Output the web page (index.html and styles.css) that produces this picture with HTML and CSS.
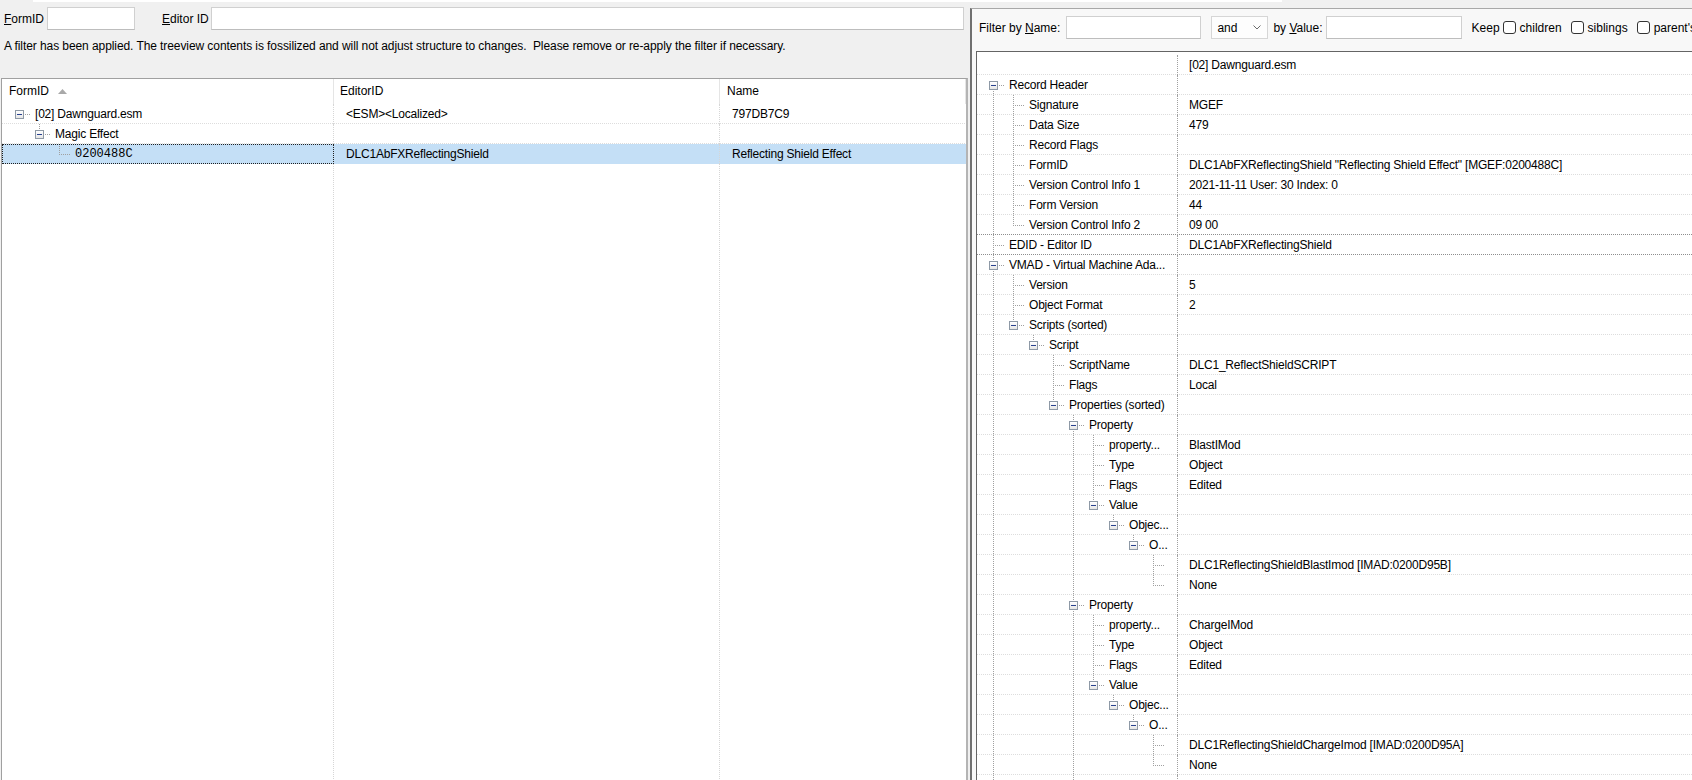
FILE: index.html
```html
<!DOCTYPE html>
<html>
<head>
<meta charset="utf-8">
<title>Record view</title>
<link rel="stylesheet" href="styles.css">
</head>
<body>
<div class="app">
  <div class="strip"></div>
  <div class="panes">
    <section class="left">
      <div class="search">
        <label class="lbl"><u>F</u>ormID</label>
        <input class="field formid" type="text">
        <label class="lbl lbl-editor"><u>E</u>ditor ID</label>
        <input class="field editor" type="text">
      </div>
      <p class="notice">A filter has been applied. The treeview contents is fossilized and will not adjust structure to changes.  Please remove or re-apply the filter if necessary.</p>
      <div class="grid">
        <div class="grid-head">
          <div class="hc c1">FormID<svg class="sort" width="9" height="5" viewBox="0 0 9 5"><path d="M0 5 L4.5 0 L9 5 Z" fill="#a9a9a9"/></svg></div>
          <div class="hc c2">EditorID</div>
          <div class="hc c3">Name</div>
        </div>
        <div class="grid-body">
          <div class="row">
            <div class="cell c1 node"><span class="g g-b"><span class="box"></span></span><span class="t">[02] Dawnguard.esm</span></div>
            <div class="cell c2 txt">&lt;ESM&gt;&lt;Localized&gt;</div>
            <div class="cell c3 txt">797DB7C9</div>
          </div>
          <div class="row">
            <div class="cell c1 node"><span class="g"></span><span class="g g-bu"><span class="box"></span></span><span class="t">Magic Effect</span></div>
            <div class="cell c2 txt"></div>
            <div class="cell c3 txt"></div>
          </div>
          <div class="row sel">
            <div class="cell c1 node focus"><span class="g"></span><span class="g"></span><span class="g g-l"></span><span class="t mono">0200488C</span></div>
            <div class="cell c2 txt">DLC1AbFXReflectingShield</div>
            <div class="cell c3 txt">Reflecting Shield Effect</div>
          </div>
        </div>
      </div>
    </section>

    <section class="right">
      <div class="filter">
        <span class="lbl">Filter by <u>N</u>ame:</span>
        <input class="field f-name" type="text">
        <div class="combo"><span>and</span><svg width="8" height="5" viewBox="0 0 8 5"><path d="M0.5 0.5 L4 4 L7.5 0.5" fill="none" stroke="#6b6b6b" stroke-width="1"/></svg></div>
        <span class="lbl by-value">by <u>V</u>alue:</span>
        <input class="field f-value" type="text">
        <span class="lbl keep">Keep</span>
        <span class="chk"></span><span class="lbl">children</span>
        <span class="chk next"></span><span class="lbl">siblings</span>
        <span class="chk next"></span><span class="lbl">parent's</span>
      </div>
      <div class="view">
        <div class="row"><div class="lab"></div><div class="val">[02] Dawnguard.esm</div></div>
        <div class="row"><div class="lab"><span class="g g-bd"><span class="box"></span></span><span class="t">Record Header</span></div><div class="val"></div></div>
        <div class="row"><div class="lab"><span class="g g-v"></span><span class="g g-t"></span><span class="t">Signature</span></div><div class="val">MGEF</div></div>
        <div class="row"><div class="lab"><span class="g g-v"></span><span class="g g-t"></span><span class="t">Data Size</span></div><div class="val">479</div></div>
        <div class="row"><div class="lab"><span class="g g-v"></span><span class="g g-t"></span><span class="t">Record Flags</span></div><div class="val"></div></div>
        <div class="row"><div class="lab"><span class="g g-v"></span><span class="g g-t"></span><span class="t">FormID</span></div><div class="val">DLC1AbFXReflectingShield "Reflecting Shield Effect" [MGEF:0200488C]</div></div>
        <div class="row"><div class="lab"><span class="g g-v"></span><span class="g g-t"></span><span class="t">Version Control Info 1</span></div><div class="val">2021-11-11 User: 30 Index: 0</div></div>
        <div class="row"><div class="lab"><span class="g g-v"></span><span class="g g-t"></span><span class="t">Form Version</span></div><div class="val">44</div></div>
        <div class="row major"><div class="lab"><span class="g g-v"></span><span class="g g-l"></span><span class="t">Version Control Info 2</span></div><div class="val">09 00</div></div>
        <div class="row major"><div class="lab"><span class="g g-t"></span><span class="t">EDID - Editor ID</span></div><div class="val">DLC1AbFXReflectingShield</div></div>
        <div class="row"><div class="lab"><span class="g g-bud"><span class="box"></span></span><span class="t">VMAD - Virtual Machine Ada...</span></div><div class="val"></div></div>
        <div class="row"><div class="lab"><span class="g g-v"></span><span class="g g-t"></span><span class="t">Version</span></div><div class="val">5</div></div>
        <div class="row"><div class="lab"><span class="g g-v"></span><span class="g g-t"></span><span class="t">Object Format</span></div><div class="val">2</div></div>
        <div class="row"><div class="lab"><span class="g g-v"></span><span class="g g-bu"><span class="box"></span></span><span class="t">Scripts (sorted)</span></div><div class="val"></div></div>
        <div class="row"><div class="lab"><span class="g g-v"></span><span class="g"></span><span class="g g-bu"><span class="box"></span></span><span class="t">Script</span></div><div class="val"></div></div>
        <div class="row"><div class="lab"><span class="g g-v"></span><span class="g"></span><span class="g"></span><span class="g g-t"></span><span class="t">ScriptName</span></div><div class="val">DLC1_ReflectShieldSCRIPT</div></div>
        <div class="row"><div class="lab"><span class="g g-v"></span><span class="g"></span><span class="g"></span><span class="g g-t"></span><span class="t">Flags</span></div><div class="val">Local</div></div>
        <div class="row"><div class="lab"><span class="g g-v"></span><span class="g"></span><span class="g"></span><span class="g g-bu"><span class="box"></span></span><span class="t">Properties (sorted)</span></div><div class="val"></div></div>

        <div class="row"><div class="lab"><span class="g g-v"></span><span class="g"></span><span class="g"></span><span class="g"></span><span class="g g-bud"><span class="box"></span></span><span class="t">Property</span></div><div class="val"></div></div>
        <div class="row"><div class="lab"><span class="g g-v"></span><span class="g"></span><span class="g"></span><span class="g"></span><span class="g g-v"></span><span class="g g-t"></span><span class="t">property...</span></div><div class="val">BlastIMod</div></div>
        <div class="row"><div class="lab"><span class="g g-v"></span><span class="g"></span><span class="g"></span><span class="g"></span><span class="g g-v"></span><span class="g g-t"></span><span class="t">Type</span></div><div class="val">Object</div></div>
        <div class="row"><div class="lab"><span class="g g-v"></span><span class="g"></span><span class="g"></span><span class="g"></span><span class="g g-v"></span><span class="g g-t"></span><span class="t">Flags</span></div><div class="val">Edited</div></div>
        <div class="row"><div class="lab"><span class="g g-v"></span><span class="g"></span><span class="g"></span><span class="g"></span><span class="g g-v"></span><span class="g g-bu"><span class="box"></span></span><span class="t">Value</span></div><div class="val"></div></div>
        <div class="row"><div class="lab"><span class="g g-v"></span><span class="g"></span><span class="g"></span><span class="g"></span><span class="g g-v"></span><span class="g"></span><span class="g g-bu"><span class="box"></span></span><span class="t">Objec...</span></div><div class="val"></div></div>
        <div class="row"><div class="lab"><span class="g g-v"></span><span class="g"></span><span class="g"></span><span class="g"></span><span class="g g-v"></span><span class="g"></span><span class="g"></span><span class="g g-bu"><span class="box"></span></span><span class="t">O...</span></div><div class="val"></div></div>
        <div class="row"><div class="lab"><span class="g g-v"></span><span class="g"></span><span class="g"></span><span class="g"></span><span class="g g-v"></span><span class="g"></span><span class="g"></span><span class="g"></span><span class="g g-t"></span></div><div class="val">DLC1ReflectingShieldBlastImod [IMAD:0200D95B]</div></div>
        <div class="row"><div class="lab"><span class="g g-v"></span><span class="g"></span><span class="g"></span><span class="g"></span><span class="g g-v"></span><span class="g"></span><span class="g"></span><span class="g"></span><span class="g g-l"></span></div><div class="val">None</div></div>

        <div class="row"><div class="lab"><span class="g g-v"></span><span class="g"></span><span class="g"></span><span class="g"></span><span class="g g-bud"><span class="box"></span></span><span class="t">Property</span></div><div class="val"></div></div>
        <div class="row"><div class="lab"><span class="g g-v"></span><span class="g"></span><span class="g"></span><span class="g"></span><span class="g g-v"></span><span class="g g-t"></span><span class="t">property...</span></div><div class="val">ChargeIMod</div></div>
        <div class="row"><div class="lab"><span class="g g-v"></span><span class="g"></span><span class="g"></span><span class="g"></span><span class="g g-v"></span><span class="g g-t"></span><span class="t">Type</span></div><div class="val">Object</div></div>
        <div class="row"><div class="lab"><span class="g g-v"></span><span class="g"></span><span class="g"></span><span class="g"></span><span class="g g-v"></span><span class="g g-t"></span><span class="t">Flags</span></div><div class="val">Edited</div></div>
        <div class="row"><div class="lab"><span class="g g-v"></span><span class="g"></span><span class="g"></span><span class="g"></span><span class="g g-v"></span><span class="g g-bu"><span class="box"></span></span><span class="t">Value</span></div><div class="val"></div></div>
        <div class="row"><div class="lab"><span class="g g-v"></span><span class="g"></span><span class="g"></span><span class="g"></span><span class="g g-v"></span><span class="g"></span><span class="g g-bu"><span class="box"></span></span><span class="t">Objec...</span></div><div class="val"></div></div>
        <div class="row"><div class="lab"><span class="g g-v"></span><span class="g"></span><span class="g"></span><span class="g"></span><span class="g g-v"></span><span class="g"></span><span class="g"></span><span class="g g-bu"><span class="box"></span></span><span class="t">O...</span></div><div class="val"></div></div>
        <div class="row"><div class="lab"><span class="g g-v"></span><span class="g"></span><span class="g"></span><span class="g"></span><span class="g g-v"></span><span class="g"></span><span class="g"></span><span class="g"></span><span class="g g-t"></span></div><div class="val">DLC1ReflectingShieldChargeImod [IMAD:0200D95A]</div></div>
        <div class="row"><div class="lab"><span class="g g-v"></span><span class="g"></span><span class="g"></span><span class="g"></span><span class="g g-v"></span><span class="g"></span><span class="g"></span><span class="g"></span><span class="g g-l"></span></div><div class="val">None</div></div>
        <div class="row"><div class="lab"><span class="g g-v"></span><span class="g"></span><span class="g"></span><span class="g"></span><span class="g g-v"></span></div><div class="val"></div></div>
      </div>
    </section>
  </div>
</div>
</body>
</html>
```

FILE: styles.css
```css
:root {
  --tree: #a0a0a0;
  --dv: repeating-linear-gradient(to bottom, var(--tree) 0 1px, transparent 1px 2px);
  --dh: repeating-linear-gradient(to right, var(--tree) 0 1px, transparent 1px 2px);
  --sep: repeating-linear-gradient(to right, #dddddd 0 1px, transparent 1px 2px);
  --sep-major: repeating-linear-gradient(to right, #8e8e8e 0 1px, transparent 1px 2px);
  --col: repeating-linear-gradient(to bottom, #d6d6d6 0 1px, transparent 1px 2px);
}

html, body {
  margin: 0;
  padding: 0;
}

body {
  width: 1692px;
  height: 780px;
  overflow: hidden;
  background: #f0f0f0;
  color: #000;
  font: 12px "Liberation Sans", Arial, sans-serif;
}

.app {
  display: flex;
  flex-direction: column;
  height: 780px;
}

.strip {
  flex: none;
  height: 2px;
  width: 1249px;
  margin-left: 33px;
  background: #fff;
}

.panes {
  flex: 1;
  display: flex;
  min-height: 0;
  overflow: hidden;
}

/* ---------- left pane: navigation grid ---------- */

.left {
  flex: none;
  width: 970px;
  display: flex;
  flex-direction: column;
}

.search {
  display: flex;
  align-items: center;
  padding: 5px 6px 0 4px;
}

.lbl {
  white-space: nowrap;
}

.field {
  box-sizing: border-box;
  height: 23px;
  margin: 0;
  padding: 0 3px;
  border: 1px solid #d0d0d0;
  border-bottom-color: #bdbdbd;
  background: #fff;
  font: inherit;
  outline: none;
}

.formid {
  width: 88px;
  margin-left: 3px;
}

.lbl-editor {
  margin-left: 27px;
}

.editor {
  flex: 1;
  min-width: 0;
  margin-left: 2px;
}

.notice {
  margin: 8px 0 0 4px;
  line-height: 16px;
  letter-spacing: -0.08px;
  white-space: pre;
}

.grid {
  flex: none;
  box-sizing: border-box;
  width: 967px;
  height: 720px;
  margin: 24px 0 0 1px;
  border: 1px solid #a0a0a0;
  border-right: 2px solid #b4b4b4;
  background: #fff;
  display: flex;
  flex-direction: column;
}

.grid-head {
  flex: none;
  display: flex;
  height: 25px;
}

.hc {
  box-sizing: border-box;
  height: 25px;
  line-height: 25px;
  padding-left: 7px;
  border-right: 1px solid #e5e5e5;
  white-space: nowrap;
}

.hc.c2 {
  padding-left: 6px;
}

.sort {
  margin-left: 9px;
  vertical-align: 1px;
}

.c1 { width: 332px; flex: none; }
.c2 { width: 386px; flex: none; }
.c3 { width: 246px; flex: none; }

.grid-body {
  flex: 1;
  background:
    var(--col) 331px 0 / 1px 100% no-repeat,
    var(--col) 717px 0 / 1px 100% no-repeat;
}

.row {
  display: flex;
  height: 20px;
  line-height: 20px;
  letter-spacing: -0.2px;
  background: var(--sep) 0 100% / 100% 1px no-repeat, #fff;
}

.row.major {
  background: var(--sep-major) 0 100% / 100% 1px no-repeat, #fff;
}

.grid .row.sel {
  background: #c4dff6;
}

.cell {
  box-sizing: border-box;
  height: 20px;
  white-space: nowrap;
  overflow: hidden;
}

.grid .cell.c1,
.grid .cell.c2 {
  border-right: 1px dotted #d6d6d6;
}

.node {
  display: flex;
  padding-left: 13px;
}

.txt {
  padding-left: 12px;
}

.focus {
  outline: 1px dotted #202020;
  outline-offset: -1px;
}

.mono {
  font-family: "Liberation Mono", "Courier New", monospace;
  letter-spacing: 0;
}

/* ---------- tree guides ---------- */

.g {
  flex: none;
  width: 20px;
  height: 20px;
}

.g-v {
  background: var(--dv) 4px 0 / 1px 20px no-repeat;
}

.g-t {
  background:
    var(--dh) 6px 10px / 10px 1px no-repeat,
    var(--dv) 4px 0 / 1px 20px no-repeat;
}

.g-l {
  background:
    var(--dh) 6px 10px / 10px 1px no-repeat,
    var(--dv) 4px 0 / 1px 11px no-repeat;
}

.g-b {
  background: var(--dh) 10px 10px / 6px 1px no-repeat;
}

.g-bu {
  background:
    var(--dh) 10px 10px / 6px 1px no-repeat,
    var(--dv) 4px 0 / 1px 6px no-repeat;
}

.g-bd {
  background:
    var(--dh) 10px 10px / 6px 1px no-repeat,
    var(--dv) 4px 16px / 1px 4px no-repeat;
}

.g-bud {
  background:
    var(--dh) 10px 10px / 6px 1px no-repeat,
    var(--dv) 4px 0 / 1px 6px no-repeat,
    var(--dv) 4px 16px / 1px 4px no-repeat;
}

.box {
  display: block;
  box-sizing: border-box;
  width: 9px;
  height: 9px;
  margin-top: 6px;
  border: 1px solid #8e99a6;
  background:
    linear-gradient(#27418f, #27418f) 1px 3px / 5px 1px no-repeat,
    linear-gradient(#ffffff, #e6e6e6);
}

.t {
  white-space: nowrap;
}

/* ---------- right pane: record view ---------- */

.right {
  flex: 1;
  min-width: 0;
  margin-top: 6px;
  border-top: 1px solid #a8a8a8;
  border-left: 2px solid #707070;
  padding-left: 4px;
  background: #f8f8f8;
  display: flex;
  flex-direction: column;
  overflow: hidden;
}

.filter {
  flex: none;
  box-sizing: border-box;
  height: 42px;
  padding: 0 0 5px 3px;
  display: flex;
  align-items: center;
  white-space: nowrap;
}

.f-name {
  flex: none;
  width: 135px;
  margin-left: 6px;
}

.combo {
  flex: none;
  box-sizing: border-box;
  width: 57px;
  height: 23px;
  margin-left: 10px;
  padding: 0 6px 0 5px;
  border: 1px solid #d6d6d6;
  background: #fdfdfd;
  display: flex;
  align-items: center;
  justify-content: space-between;
}

.by-value {
  margin-left: 5px;
}

.f-value {
  flex: none;
  width: 136px;
  margin-left: 3px;
}

.keep {
  margin-left: 10px;
}

.chk {
  flex: none;
  box-sizing: border-box;
  width: 13px;
  height: 13px;
  margin: 0 4px 0 3px;
  border: 1px solid #333;
  border-radius: 3px;
  background: #fff;
}

.chk.next {
  margin-left: 9px;
}

.view {
  flex: 1;
  border: 1px solid #646464;
  border-right: none;
  border-bottom: none;
  padding-top: 3px;
  background: #fff;
}

.lab {
  flex: none;
  box-sizing: border-box;
  width: 201px;
  height: 20px;
  padding-left: 12px;
  border-right: 1px dotted #a0a0a0;
  display: flex;
  overflow: hidden;
  white-space: nowrap;
}

.val {
  flex: 1;
  min-width: 0;
  padding-left: 11px;
  white-space: nowrap;
  overflow: hidden;
}
```
